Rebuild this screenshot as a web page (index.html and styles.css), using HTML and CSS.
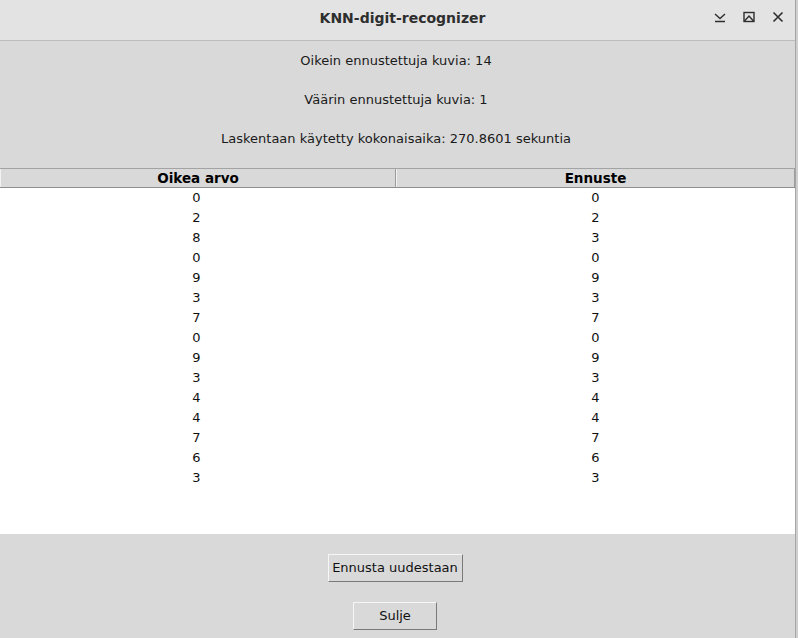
FILE: index.html
```html
<!DOCTYPE html>
<html>
<head>
<meta charset="utf-8">
<link rel="stylesheet" href="styles.css">
</head>
<body>
<div class="screen">
  <div class="window">
    <div class="titlebar">
      <div class="title">KNN-digit-recognizer</div>
      <div class="controls">
        <svg class="ctl" width="14" height="14" viewBox="0 0 14 14"><path d="M2 4 L7 8.5 L12 4 M2 11.5 H12" fill="none" stroke="#2e2e2e" stroke-width="1.4"/></svg>
        <svg class="ctl" width="14" height="14" viewBox="0 0 14 14"><rect x="2" y="2.5" width="10" height="9" fill="none" stroke="#2e2e2e" stroke-width="1.4"/><path d="M2.5 11 L7 6 L11.5 11" fill="none" stroke="#2e2e2e" stroke-width="1.4"/></svg>
        <svg class="ctl" width="14" height="14" viewBox="0 0 14 14"><path d="M2.5 2.5 L11.5 11.5 M11.5 2.5 L2.5 11.5" fill="none" stroke="#2e2e2e" stroke-width="1.6"/></svg>
      </div>
    </div>
    <div class="content">
      <div class="label">Oikein ennustettuja kuvia: 14</div>
      <div class="label">Väärin ennustettuja kuvia: 1</div>
      <div class="label">Laskentaan käytetty kokonaisaika: 270.8601 sekuntia</div>
      <div class="table">
        <div class="thead">
          <div class="th th-first">Oikea arvo</div>
          <div class="th th-second">Ennuste</div>
        </div>
        <div class="tbody">
          <div class="tr"><div class="td">0</div><div class="td">0</div></div>
          <div class="tr"><div class="td">2</div><div class="td">2</div></div>
          <div class="tr"><div class="td">8</div><div class="td">3</div></div>
          <div class="tr"><div class="td">0</div><div class="td">0</div></div>
          <div class="tr"><div class="td">9</div><div class="td">9</div></div>
          <div class="tr"><div class="td">3</div><div class="td">3</div></div>
          <div class="tr"><div class="td">7</div><div class="td">7</div></div>
          <div class="tr"><div class="td">0</div><div class="td">0</div></div>
          <div class="tr"><div class="td">9</div><div class="td">9</div></div>
          <div class="tr"><div class="td">3</div><div class="td">3</div></div>
          <div class="tr"><div class="td">4</div><div class="td">4</div></div>
          <div class="tr"><div class="td">4</div><div class="td">4</div></div>
          <div class="tr"><div class="td">7</div><div class="td">7</div></div>
          <div class="tr"><div class="td">6</div><div class="td">6</div></div>
          <div class="tr"><div class="td">3</div><div class="td">3</div></div>
        </div>
      </div>
      <div class="buttons">
        <div class="btn btn-again">Ennusta uudestaan</div>
        <div class="btn btn-close">Sulje</div>
      </div>
    </div>
  </div>
  <div class="edge"></div>
</div>
</body>
</html>
```

FILE: styles.css
```css
html, body {
  margin: 0;
  padding: 0;
}
body {
  width: 798px;
  height: 638px;
  overflow: hidden;
  font-family: "DejaVu Sans", sans-serif;
  font-size: 13px;
  color: #1a1a1a;
  background: #d9d9d9;
}
.screen {
  display: flex;
  width: 798px;
  height: 638px;
}
.window {
  width: 795px;
  height: 638px;
  border-right: 1px solid #a6a6a6;
  display: flex;
  flex-direction: column;
  background: #d9d9d9;
}
.edge {
  width: 2px;
  height: 638px;
  background: #cfcfcf;
}
.titlebar {
  height: 40px;
  background: #e3e3e4;
  border-bottom: 1px solid #bcbcbc;
  position: relative;
  display: flex;
  align-items: center;
  justify-content: center;
}
.title {
  font-weight: bold;
  font-size: 14px;
  color: #2e2e2e;
  margin-top: -4px;
  padding-left: 10px;
}
.controls {
  position: absolute;
  right: 10px;
  top: 10px;
  display: flex;
  gap: 15px;
}
.content {
  display: flex;
  flex-direction: column;
}
.label {
  height: 39px;
  line-height: 39px;
  text-align: center;
  color: #1a1a1a;
  padding-right: 3px;
}
.table {
  margin-top: 10px;
  display: flex;
  flex-direction: column;
}
.thead {
  display: flex;
  height: 18px;
  border-top: 1px solid #a3a3a3;
  border-bottom: 1px solid #8e8e8e;
  background: #d9d9d9;
}
.th {
  box-sizing: border-box;
  text-align: center;
  font-weight: bold;
  font-size: 13.5px;
  color: #000;
  line-height: 18px;
  border-right: 1px solid #9c9c9c;
  border-left: 1px solid #f2f2f2;
}
.th-first {
  width: 396px;
}
.th-second {
  width: 399px;
}
.tbody {
  height: 346px;
  background: #ffffff;
}
.tr {
  display: flex;
  height: 20px;
  line-height: 19px;
}
.td {
  width: 397px;
  text-align: center;
  color: #111;
}
.td:first-child {
  padding-right: 4px;
  box-sizing: border-box;
}
.buttons {
  display: flex;
  flex-direction: column;
  align-items: center;
  padding-top: 20px;
  padding-right: 5px;
  gap: 20px;
}
.btn {
  box-sizing: border-box;
  border-top: 1px solid #f6f6f6;
  border-left: 1px solid #f6f6f6;
  border-right: 1px solid #7a7a7a;
  border-bottom: 1px solid #7a7a7a;
  text-align: center;
  color: #111;
  background: #d9d9d9;
}
.btn-again {
  width: 135px;
  height: 28px;
  line-height: 25px;
}
.btn-close {
  width: 84px;
  height: 28px;
  line-height: 26px;
}
```
